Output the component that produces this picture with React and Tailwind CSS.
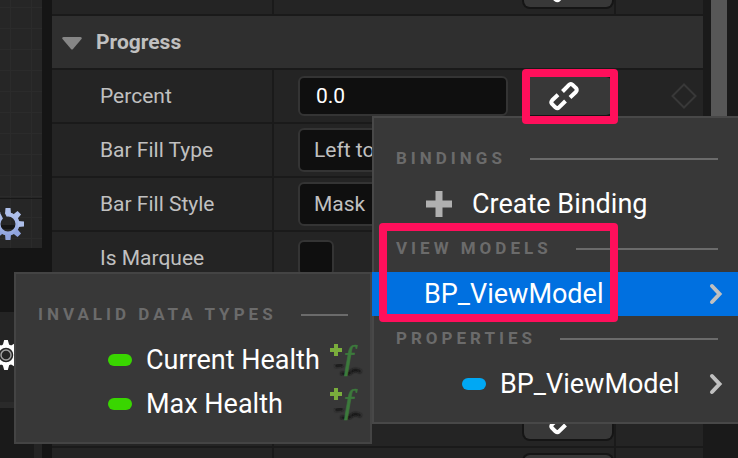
import React from 'react';

const LinkIcon = () => (
    <svg width="32" height="32" viewBox="0 0 32 32" fill="none" stroke="#fff" strokeWidth="4" aria-hidden="true">
        <path d="M14.5 11.5 L21 4.8 Q22.5 3.2 24.5 4.8 L28 8 Q29.5 10 27.8 12 L22 17.5" />
        <path d="M17.5 21 L11 27.4 Q9.5 29 7.5 27.4 L4 24 Q2.5 22.2 4.2 20.2 L10 14.8" />
    </svg>
);

const BindButton = () => (
    <button type="button" aria-label="Bind" className="flex h-[38px] w-[88px] items-center rounded-md bg-[#383838] pl-6 shadow-[0_0_0_2px_#151515]">
        <LinkIcon />
    </button>
);

const Chevron = () => (
    <svg width="14" height="22" viewBox="0 0 14 22" fill="none" stroke="#c0c0c0" strokeWidth="4" strokeLinecap="round" aria-hidden="true">
        <path d="M3 3 L10.5 11 L3 19" />
    </svg>
);

const FunctionIcon = () => (
    <svg width="34" height="44" viewBox="0 0 34 44" className="overflow-visible" aria-hidden="true">
        <defs>
            <filter id="soft">
                <feGaussianBlur stdDeviation="1" />
            </filter>
        </defs>
        <g filter="url(#soft)" fill="none" stroke="#151515" strokeWidth="3">
            <path d="M5 28 L13 27" />
            <path d="M11 35 Q17 38 21 34 T31 34" />
        </g>
        <text x="14" y="31" fill="#3c7a3c" stroke="#3c7a3c" strokeWidth="0.6" fontFamily="Liberation Serif" fontStyle="italic" fontSize="34">f</text>
        <path d="M6 6 V18 M0 12 H12" stroke="#7aad3c" strokeWidth="4" />
    </svg>
);

const teeth = [0, 45, 90, 135, 180, 225, 270, 315];

const BlueGear = () => (
    <svg width="34" height="34" viewBox="-17 -17 34 34" aria-hidden="true">
        <defs>
            <linearGradient id="steel" gradientUnits="userSpaceOnUse" x1="0" y1="-16" x2="0" y2="16">
                <stop offset="0" stopColor="#b9c8ee" />
                <stop offset="1" stopColor="#8a9fdc" />
            </linearGradient>
        </defs>
        <path d="M-7 3 H7" stroke="#151515" strokeWidth="4" />
        <circle r="9.5" fill="none" stroke="url(#steel)" strokeWidth="4" />
        {teeth.map((a) => (
            <path key={a} d="M-3 -10 L-2.5 -16 H2.5 L3 -10 Z" fill={a > 90 && a < 270 ? '#8fa3de' : '#aebfea'} transform={`rotate(${a})`} />
        ))}
        <path d="M-6 -12 L-2 -4" stroke="#262626" strokeWidth="4" />
    </svg>
);

const WhiteGear = () => (
    <svg width="30" height="30" viewBox="-15 -15 30 30" aria-hidden="true">
        {teeth.map((a) => (
            <path key={a} d="M-3.5 -9 L-1.8 -15 H1.8 L3.5 -9 Z" fill="#fff" transform={`rotate(${a})`} />
        ))}
        <circle r="9" fill="#242424" stroke="#fff" strokeWidth="3.5" />
        <circle r="5" fill="none" stroke="#a0a0a0" strokeWidth="1.5" />
    </svg>
);

const Row = ({ label, htmlFor, bind, reset, children }) => (
    <div className="flex h-[54px] shrink-0 border-b-2 border-[#1a1a1a]">
        <div className="flex w-[222px] shrink-0 items-center border-r-2 border-[#1a1a1a] pt-0.5 pl-12">
            <label htmlFor={htmlFor}>{label}</label>
        </div>
        <div className="flex flex-1 items-center border-r-2 border-[#1a1a1a] pl-6">
            <div className="w-[226px] shrink-0">{children}</div>
            {bind && <BindButton />}
        </div>
        <div className="flex w-[87px] shrink-0 items-center justify-end pr-1.5">
            {reset && (
                <svg width="26" height="26" viewBox="0 0 26 26" fill="none" stroke="#383838" strokeWidth="2" aria-hidden="true">
                    <path d="M13 1.5 L24.5 13 L13 24.5 L1.5 13 Z" />
                </svg>
            )}
        </div>
    </div>
);

const MenuHeading = ({ children }) => (
    <div className="flex h-[46px] items-center gap-6 pl-[22px] text-[17px] font-bold tracking-[4px] text-[#6b6b6b]">
        <span className="whitespace-nowrap">{children}</span>
        <span className="h-0.5 flex-1 bg-[#6b6b6b]" />
    </div>
);

const menuItem = 'flex h-11 items-center whitespace-nowrap text-left text-[27px] text-white';
const field = 'block w-[210px] appearance-none rounded-md border-2 border-[#343434] bg-[#0f0f0f] outline-none';

export const App = () => {
    return (
        <main className="relative flex h-screen overflow-hidden bg-[#151515] font-[Roboto,sans-serif] text-[21px] text-[#c0c0c0]">
            <aside className="flex w-[42px] shrink-0 flex-col overflow-hidden">
                <div className="flex h-[248px] flex-col justify-end bg-[#262626] bg-[linear-gradient(#2b2b2b_1px,transparent_1px),linear-gradient(90deg,#2b2b2b_1px,transparent_1px)] bg-[size:21px_21px] bg-[position:10px_7px]">
                    <div className="h-[50px] border-t border-[#171717] pt-2">
                        <div className="-ml-[9px]"><BlueGear /></div>
                    </div>
                </div>
                <div className="mt-16 h-24 border-b-[6px] border-[#2a2a2a] bg-[#242424] pt-7">
                    <div className="-ml-[9px]"><WhiteGear /></div>
                </div>
                <div className="flex-1 border-r-8 border-[#242424] bg-[#1a1a1a]" />
            </aside>

            {/* details list, scrolled part of the way down */}
            <section className="ml-2.5 flex min-w-0 flex-1 flex-col overflow-hidden bg-[#242424]">
                <div className="-mt-[38px] flex flex-col">
                    <Row bind />
                    <h2 className="flex h-[54px] shrink-0 items-center gap-3.5 border-b-2 border-[#1a1a1a] bg-[#2f2f2f] pt-0.5 pl-2.5 font-bold">
                        <svg width="20" height="13" viewBox="0 0 20 13" fill="#868686" aria-hidden="true">
                            <path d="M1.5 0 H18.5 Q20.5 0.5 19.5 2 L11 12 Q10 13 9 12 L0.5 2 Q-0.5 0.5 1.5 0 Z" />
                        </svg>
                        Progress
                    </h2>
                    <Row label="Percent" htmlFor="percent" bind reset>
                        <input id="percent" defaultValue="0.0" className={`${field} h-10 pl-4 text-white`} />
                    </Row>
                    <Row label="Bar Fill Type" htmlFor="fill-type">
                        <select id="fill-type" className={`${field} h-11 pt-0.5 pl-3.5`}>
                            <option>Left to Right</option>
                        </select>
                    </Row>
                    <Row label="Bar Fill Style" htmlFor="fill-style">
                        <select id="fill-style" className={`${field} h-11 pt-0.5 pl-3.5`}>
                            <option>Mask</option>
                        </select>
                    </Row>
                    <Row label="Is Marquee" htmlFor="marquee">
                        <input id="marquee" type="checkbox" className="block size-9 appearance-none rounded-md border-2 border-[#343434] bg-[#0f0f0f]" />
                    </Row>
                    <Row />
                    <Row />
                    <Row bind />
                    <Row bind />
                </div>
            </section>
            <div className="w-[35px] shrink-0 bg-[#1a1a1a]">
                <div className="ml-2 h-[400px] w-4 bg-[#575757]" />
            </div>

            <nav className="absolute top-[116px] right-0 left-[372px] border-y-2 border-[#484848] bg-[#383838] bg-[linear-gradient(90deg,#484848_2px,transparent_2px)] pt-[18px] pb-4">
                <div className="pr-5 pl-0.5"><MenuHeading>BINDINGS</MenuHeading></div>
                <button type="button" className={`${menuItem} w-full gap-5 pl-[54px]`}>
                    <svg width="26" height="26" viewBox="0 0 26 26" stroke="#b0b0b0" strokeWidth="7" strokeLinejoin="round" aria-hidden="true">
                        <path d="M13 0 V26 M0 13 H26" />
                    </svg>
                    Create Binding
                </button>
                <div className="pr-5 pl-0.5"><MenuHeading>VIEW MODELS</MenuHeading></div>
                <button type="button" className={`${menuItem} w-full justify-between bg-[#0070e0] pr-[15px] pl-[52px]`}>
                    BP_ViewModel
                    <Chevron />
                </button>
                <div className="pr-5 pl-0.5"><MenuHeading>PROPERTIES</MenuHeading></div>
                <button type="button" className={`${menuItem} w-full pr-[15px] pl-[90px]`}>
                    <span className="mr-3.5 h-3 w-6 rounded-md bg-[#00a8f4]" />
                    <span className="flex-1">BP_ViewModel</span>
                    <Chevron />
                </button>
            </nav>

            <nav className="absolute top-[272px] left-3.5 w-[358px] border-2 border-[#444444] bg-[#383838] pt-[18px] pb-4">
                <div className="pr-[22px]"><MenuHeading>INVALID DATA TYPES</MenuHeading></div>
                {['Current Health', 'Max Health'].map((name) => (
                    <button type="button" key={name} className={`${menuItem} w-full pr-1.5 pl-[92px]`}>
                        <span className="mr-3.5 h-3 w-6 rounded-md bg-[#39d600]" />
                        <span className="flex-1">{name}</span>
                        <FunctionIcon />
                    </button>
                ))}
            </nav>

            <div className="pointer-events-none absolute top-[69px] left-[522px] h-[55px] w-24 rounded-sm border-8 border-[#ff0f5b]" />
            <div className="pointer-events-none absolute top-[223px] left-[379px] h-[99px] w-[239px] rounded-sm border-8 border-[#ff0f5b]" />
        </main>
    );
};

export default App;
